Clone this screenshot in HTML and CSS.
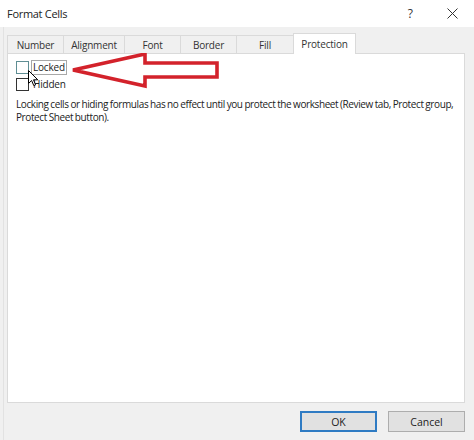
FILE: index.html
```html
<!DOCTYPE html>
<html>
<head>
<meta charset="utf-8">
<link rel="stylesheet" href="styles.css">
</head>
<body>
<div class="window">
  <div class="titlebar">
    <span class="title">Format Cells</span>
    <div class="controls">
      <span class="help">?</span>
      <svg class="close" width="11" height="11" viewBox="0 0 11 11"><path d="M0.5 0.5 L10.5 10.5 M10.5 0.5 L0.5 10.5" stroke="#333" stroke-width="1" fill="none"/></svg>
    </div>
  </div>
  <div class="body">
    <div class="tabs">
      <div class="tab t-number">Number</div>
      <div class="tab t-align">Alignment</div>
      <div class="tab t-font">Font</div>
      <div class="tab t-border">Border</div>
      <div class="tab t-fill">Fill</div>
      <div class="tab active t-prot">Protection</div>
    </div>
    <div class="panel">
      <div class="check-row">
        <span class="box box-hover"></span>
        <span class="label focus">Locked</span>
      </div>
      <div class="check-row">
        <span class="box"></span>
        <span class="label">Hidden</span>
      </div>
      <p class="note">Locking cells or hiding formulas has no effect until you protect the worksheet (Review tab, Protect group, Protect Sheet button).</p>
      <svg class="arrow" width="160" height="44" viewBox="0 0 160 44">
        <polygon points="4,18 76,2 76,11 148,11 148,25 76,25 76,34" fill="#fff" stroke="#d3222b" stroke-width="3.6" stroke-linejoin="miter"/>
      </svg>
      <svg class="cursor" width="11" height="17" viewBox="0 0 11 17">
        <path d="M0.5 0.5 L0.5 13.5 L3.6 10.5 L5.8 15.6 L7.6 14.8 L5.5 9.8 L9.8 9.8 Z" fill="#fff" stroke="#000" stroke-width="1" stroke-linejoin="round"/>
      </svg>
    </div>
    <div class="footer">
      <button class="btn btn-ok">OK</button>
      <button class="btn">Cancel</button>
    </div>
  </div>
</div>
</body>
</html>
```

FILE: styles.css
```css
html, body {
  margin: 0;
  padding: 0;
}
body {
  width: 474px;
  height: 440px;
  overflow: hidden;
  background: #f0f0f0;
  font-family: "Open Sans", "Noto Sans", sans-serif;
  color: #1a1a1a;
}
.window {
  width: 474px;
  height: 440px;
  display: flex;
  flex-direction: column;
  box-sizing: border-box;
}
.titlebar {
  height: 27px;
  background: #fff;
  display: flex;
  align-items: center;
  justify-content: space-between;
  padding: 0 16px 0 7px;
  flex-shrink: 0;
}
.title {
  font-size: 11px;
  color: #222;
  letter-spacing: -0.3px;
}
.controls {
  display: flex;
  align-items: center;
  gap: 34px;
}
.help {
  font-size: 12px;
  color: #333;
}
.close {
  display: block;
}
.body {
  flex: 1;
  display: flex;
  flex-direction: column;
  padding: 6px 9px 0 3px;
  border-left: 1px solid #e2e2e2;
  margin-left: 3px;
}
.tabs {
  display: flex;
  height: 20px;
  align-items: flex-end;
  position: relative;
  z-index: 1;
}
.tab {
  height: 18px;
  box-sizing: border-box;
  border: 1px solid #dadada;
  border-bottom: none;
  border-right: none;
  background: #f0f0f0;
  font-size: 10px;
  color: #333;
  display: flex;
  align-items: center;
  justify-content: center;
  letter-spacing: -0.2px;
}
.t-number { width: 56px; }
.t-align { width: 61px; }
.t-font { width: 56px; }
.t-border { width: 56px; }
.t-fill { width: 57px; }
.tab.active {
  width: 63px;
  height: 21px;
  margin-bottom: -1px;
  background: #fff;
  border-right: 1px solid #dadada;
}
.panel {
  position: relative;
  height: 350px;
  box-sizing: border-box;
  background: #fff;
  border: 1px solid #dadada;
  padding: 5px 3px 0 8px;
  flex-shrink: 0;
}
.check-row {
  display: flex;
  align-items: center;
  height: 17px;
  gap: 3px;
}
.box {
  width: 13px;
  height: 13px;
  box-sizing: border-box;
  border: 1px solid #333;
  background: #fff;
}
.box-hover {
  border-color: #5f8e94;
}
.label {
  font-size: 10px;
  color: #222;
  padding: 0 1px;
  line-height: 13px;
  letter-spacing: -0.2px;
}
.focus {
  outline: 1px solid #a8a8a8;
  outline-offset: 0;
}
.note {
  margin: 5px 0 0 0;
  font-size: 10px;
  line-height: 13px;
  color: #222;
  letter-spacing: -0.4px;
  word-spacing: -0.4px;
}
.arrow {
  position: absolute;
  left: 61px;
  top: -2px;
}
.cursor {
  position: absolute;
  left: 20px;
  top: 16px;
}
.footer {
  display: flex;
  justify-content: flex-end;
  gap: 11px;
  padding-top: 8px;
}
.btn {
  width: 77px;
  height: 21px;
  box-sizing: border-box;
  border: 1px solid #adadad;
  background: #e1e1e1;
  font-family: "Open Sans", "Noto Sans", sans-serif;
  font-size: 10.5px;
  color: #222;
  padding: 0;
}
.btn-ok {
  border: 2px solid #2f7bc3;
}
```
